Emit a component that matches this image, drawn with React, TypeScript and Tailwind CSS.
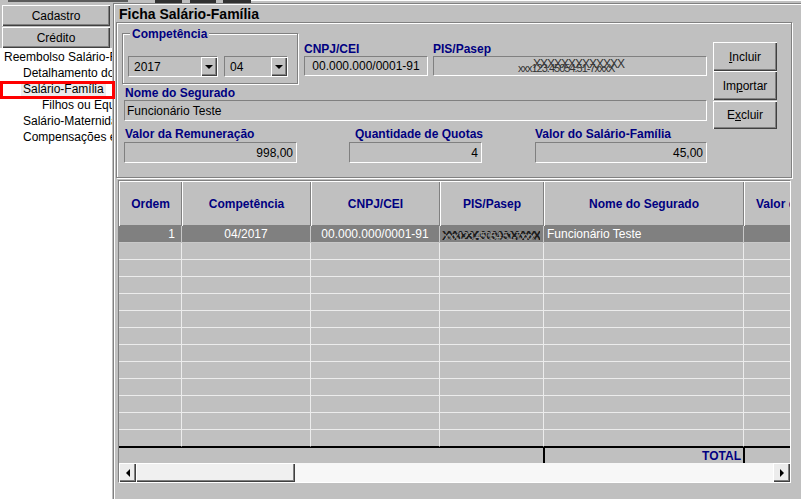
import React from "react";

const LABEL = "font-bold text-[#000080] text-[12px] leading-[14px] whitespace-nowrap";
const SUNKEN =
  "border border-t-[#808080] border-l-[#808080] border-r-white border-b-white bg-[#c0c0c0]";
const RAISED =
  "bg-[#c0c0c0] shadow-[inset_1px_1px_0_#ffffff,inset_-1px_-1px_0_#404040,inset_-2px_-2px_0_#808080]";
const ETCHED = "border border-[#808080] shadow-[inset_1px_1px_0_#ffffff,1px_1px_0_#ffffff]";

const Arrow = ({ dir }: { dir: "down" | "left" | "right" }) => {
  if (dir === "down")
    return (
      <span className="w-0 h-0 border-l-[4px] border-r-[4px] border-t-[4px] border-l-transparent border-r-transparent border-t-black" />
    );
  if (dir === "left")
    return (
      <span className="w-0 h-0 border-t-[4px] border-b-[4px] border-r-[4px] border-t-transparent border-b-transparent border-r-black" />
    );
  return (
    <span className="w-0 h-0 border-t-[4px] border-b-[4px] border-l-[4px] border-t-transparent border-b-transparent border-l-black" />
  );
};

const Select = ({ value, className }: { value: string; className: string }) => (
  <div className={`${SUNKEN} ${className} h-[21px] flex items-stretch`}>
    <span className="flex-1 pl-[5px] flex items-center">{value}</span>
    <span className={`${RAISED} w-[16px] flex items-center justify-center`}>
      <Arrow dir="down" />
    </span>
  </div>
);

const tree = [
  { t: "Reembolso Salário-Família", pad: "pl-[4px]" },
  { t: "Detalhamento do Reembolso", pad: "pl-[23px]" },
  { t: "Salário-Família", pad: "pl-[23px]", sel: true },
  { t: "Filhos ou Equiparados", pad: "pl-[42px]" },
  { t: "Salário-Maternidade", pad: "pl-[23px]" },
  { t: "Compensações entre Regimes", pad: "pl-[23px]" },
];

const cols = ["w-[63px]", "w-[129px]", "w-[129px]", "w-[104px]", "w-[200px]", "w-[160px]"];
const headers = [
  "Ordem",
  "Competência",
  "CNPJ/CEI",
  "PIS/Pasep",
  "Nome do Segurado",
  "Valor do Salário-Família",
];

const PisScribble = () => (
  <span className="relative block w-[98px] h-[14px] overflow-hidden">
    <span className="absolute left-0 top-[-1px] font-bold text-[13px] tracking-[-3px] text-[#1c1c1c] whitespace-nowrap">
      XXXXXXXXXXXXXXXXXXXXXX
    </span>
    <span className="absolute left-[2px] top-[1px] text-[11px] tracking-[-1px] text-[#9a9a9a] whitespace-nowrap">
      xxx123.45054.51-7xxx
    </span>
  </span>
);

export default function App() {
  const rows = Array.from({ length: 13 }, (_, i) => i);

  return (
    <div className="relative w-[801px] h-[499px] bg-[#c0c0c0] overflow-hidden flex flex-col font-['Liberation_Sans',Arial,sans-serif] text-[12px] text-black">
      {/* top toolbar remnant */}
      <div className="h-[3px] flex items-start">
        <div className="ml-[8px] w-[120px] h-[2px] bg-[#5a5a5a]" />
        <div className="ml-[27px] w-[27px] h-[3px] bg-[#303030]" />
        <div className="ml-[8px] w-[26px] h-[3px] bg-[#303030]" />
        <div className="ml-[7px] w-[28px] h-[3px] bg-[#303030]" />
        <div className="flex-1 h-[1px] bg-white" />
      </div>

      <div className="flex flex-1 min-h-0">
        {/* left navigation */}
        <div className="w-[113px] flex flex-col">
          <div className={`${RAISED} mt-[2px] ml-[2px] w-[108px] h-[21px] flex items-center justify-center`}>
            Cadastro
          </div>
          <div className={`${RAISED} mt-[1px] ml-[2px] w-[108px] h-[21px] flex items-center justify-center`}>
            Crédito
          </div>
          <div className="w-[112px] flex-1 bg-white pt-[1px] overflow-hidden">
            {tree.map((item) => (
              <div key={item.t} className={`h-[16px] leading-[16px] whitespace-nowrap ${item.pad}`}>
                <span className={item.sel ? "bg-[#ececec] -ml-[2px] px-[2px]" : ""}>{item.t}</span>
              </div>
            ))}
          </div>
        </div>

        {/* main area */}
        <div className="flex-1 border-t border-l border-[#808080] shadow-[inset_1px_1px_0_#ffffff] flex flex-col">
          <div className="mt-[2px] pl-[5px] h-[16px] leading-[16px] text-[14px] font-bold">
            Ficha Salário-Família
          </div>

          {/* form panel */}
          <div className={`${ETCHED} ml-[2px] w-[676px] h-[156px] flex`}>
            <div className="ml-[5px] w-[585px] flex flex-col">
              <div className="flex items-start">
                <div className="relative mt-[10px] w-[176px] h-[51px] border border-[#808080] shadow-[inset_1px_1px_0_#ffffff,1px_1px_0_#ffffff]">
                  <span className={`absolute -top-[7px] left-[7px] px-[2px] bg-[#c0c0c0] ${LABEL}`}>
                    Competência
                  </span>
                  <div className="flex mt-[22px] ml-[5px] gap-[6px]">
                    <Select value="2017" className="w-[90px]" />
                    <Select value="04" className="w-[64px]" />
                  </div>
                </div>
                <div className="mt-[19px] ml-[6px] w-[124px] flex flex-col">
                  <span className={LABEL}>CNPJ/CEI</span>
                  <div className={`${SUNKEN} h-[20px] flex items-center justify-center`}>
                    00.000.000/0001-91
                  </div>
                </div>
                <div className="mt-[19px] ml-[5px] w-[274px] flex flex-col">
                  <span className={LABEL}>PIS/Pasep</span>
                  <div className={`${SUNKEN} h-[20px] flex items-center justify-center`}>
                    <span className="relative block w-[112px] h-[16px] ml-[8px]">
                      <span className="absolute left-[15px] -top-[3px] text-[12px] tracking-[-1px] text-[#333] whitespace-nowrap">
                        XXXXXXXXXXXXX
                      </span>
                      <span className="absolute left-0 top-[2px] text-[11px] tracking-[-1px] text-[#333] whitespace-nowrap">
                        xxx123.45054.51-7xxxX
                      </span>
                    </span>
                  </div>
                </div>
              </div>

              <span className={`mt-[2px] ml-[3px] ${LABEL} leading-[13px]`}>Nome do Segurado</span>
              <div className={`${SUNKEN} ml-[2px] w-[583px] h-[21px] flex items-center pl-[2px]`}>
                Funcionário Teste
              </div>

              <div className="mt-[6px] flex">
                <div className="ml-[2px] w-[173px] flex flex-col">
                  <span className={`${LABEL} pl-[1px]`}>Valor da Remuneração</span>
                  <div className={`${SUNKEN} mt-[1px] h-[21px] flex items-center justify-end pr-[3px]`}>
                    998,00
                  </div>
                </div>
                <div className="ml-[52px] w-[133px] flex flex-col">
                  <span className={`${LABEL} pl-[6px]`}>Quantidade de Quotas</span>
                  <div className={`${SUNKEN} mt-[1px] h-[21px] flex items-center justify-end pr-[3px]`}>
                    4
                  </div>
                </div>
                <div className="ml-[53px] w-[172px] flex flex-col">
                  <span className={LABEL}>Valor do Salário-Família</span>
                  <div className={`${SUNKEN} mt-[1px] h-[21px] flex items-center justify-end pr-[3px]`}>
                    45,00
                  </div>
                </div>
              </div>
            </div>

            <div className="ml-[6px] mt-[19px] w-[64px] flex flex-col">
              <button className={`${RAISED} h-[29px] flex items-center justify-center`}>
                <span>
                  <span className="underline">I</span>ncluir
                </span>
              </button>
              <button className={`${RAISED} h-[29px] flex items-center justify-center`}>
                <span>
                  Im<span className="underline">p</span>ortar
                </span>
              </button>
              <button className={`${RAISED} mt-[1px] h-[28px] flex items-center justify-center`}>
                <span>
                  E<span className="underline">x</span>cluir
                </span>
              </button>
            </div>
          </div>

          {/* grid */}
          <div className={`${SUNKEN} mt-[2px] ml-[4px] w-[673px] h-[303px] flex flex-col overflow-hidden`}>
            <div className="flex h-[45px] shrink-0">
              {headers.map((h, i) => (
                <div
                  key={h}
                  className={`${cols[i]} shrink-0 h-full flex items-center justify-center ${LABEL} shadow-[inset_1px_1px_0_#ffffff,inset_-1px_-1px_0_#808080]`}
                >
                  {h}
                </div>
              ))}
            </div>

            {rows.map((r) => {
              const first = r === 0;
              const last = r === 12;
              const cell = `shrink-0 h-[17px] flex items-center whitespace-nowrap overflow-hidden border-r border-b ${
                first ? "border-[#c8c8c8] bg-[#808080] text-white" : "border-[#ececec]"
              } ${last ? "border-b-black" : ""}`;
              return (
                <div key={r} className="flex shrink-0">
                  <div className={`${cols[0]} ${cell} justify-end pr-[6px]`}>{first ? "1" : ""}</div>
                  <div className={`${cols[1]} ${cell} justify-center`}>{first ? "04/2017" : ""}</div>
                  <div className={`${cols[2]} ${cell} justify-center`}>
                    {first ? "00.000.000/0001-91" : ""}
                  </div>
                  <div className={`${cols[3]} ${cell} pl-[2px]`}>{first ? <PisScribble /> : null}</div>
                  <div className={`${cols[4]} ${cell} pl-[3px]`}>{first ? "Funcionário Teste" : ""}</div>
                  <div className={`${cols[5]} ${cell}`} />
                </div>
              );
            })}

            <div className="flex h-[16px] shrink-0 border-t border-black">
              <div className="w-[62px] shrink-0" />
              <div className="w-[129px] shrink-0" />
              <div className="w-[129px] shrink-0" />
              <div className="w-[104px] shrink-0" />
              <div className={`w-[202px] shrink-0 border-l-2 border-r-2 border-black flex items-center justify-end pr-[2px] ${LABEL}`}>
                TOTAL
              </div>
              <div className="w-[160px] shrink-0" />
            </div>

            <div className="flex h-[19px] shrink-0 w-[671px]">
              <div className={`${RAISED} bg-[#ececec] w-[17px] flex items-center justify-center`}>
                <Arrow dir="left" />
              </div>
              <div className={`${RAISED} bg-[#f0f0f0] w-[159px]`} />
              <div className="flex-1 bg-[#f7f7f7]" />
              <div className={`${RAISED} bg-[#ececec] w-[17px] flex items-center justify-center`}>
                <Arrow dir="right" />
              </div>
            </div>
          </div>
        </div>
      </div>

      {/* selection highlight on tree */}
      <div className="absolute left-0 top-[81px] w-[115px] h-[18px] border-[3px] border-[#ff0000]" />
    </div>
  );
}
